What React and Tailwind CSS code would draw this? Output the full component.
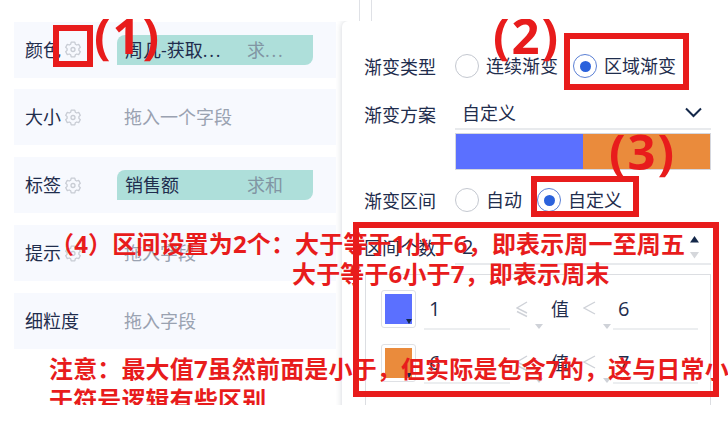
import React from 'react';
import clsx from 'clsx';

const FIELDS = [
    { label: '颜色', gear: true, pill: '周几-获取', agg: '求', truncated: true },
    { label: '大小', gear: true, placeholder: '拖入一个字段' },
    { label: '标签', gear: true, pill: '销售额', agg: '求和' },
    { label: '提示', gear: true, placeholder: '拖入字段' },
    { label: '细粒度', placeholder: '拖入字段' },
];

const RANGES = [
    { color: 'bg-[#5b70ff]', from: '1', to: '6' },
    { color: 'bg-[#ea8b3c]', from: '6', to: '7' },
];

export default function App() {
    return (
        <div className="relative flex h-[424px] w-[728px] flex-col overflow-hidden bg-white font-['Open_Sans','Noto_Sans_CJK_SC',sans-serif] text-[18px] leading-[24px] text-[#1f2d4d]">
            <div className="flex h-[21px] shrink-0 pl-[359px]">
                <div className="w-[13px] border-x border-[#dfe1e6]" />
            </div>
            <div className="flex h-[384px] shrink-0 overflow-hidden">
                <div className="flex w-[342px] shrink-0 flex-col gap-[11.9px] pl-[14px] pr-[6px] pt-[0.6px]">
                    {FIELDS.map((field) => <FieldRow key={field.label} {...field} />)}
                </div>
                <GradientPanel />
            </div>
            <Annotations />
        </div>
    );
}

function FieldRow({ label, gear, pill, agg, truncated, placeholder }) {
    return (
        <div className="flex h-14 shrink-0 items-center bg-[#f7f9fe] pl-[11px]">
            <div className="flex w-[92px] items-center gap-1">
                <span>{label}</span>
                {gear && <GearIcon />}
            </div>
            {pill ? (
                <div className="flex h-[30px] w-[196px] items-center rounded-tl-lg rounded-br-lg bg-[#aedfda] pl-2">
                    <span className="w-[122px]">{pill}{truncated && <Dots />}</span>
                    <span className="text-[#8195a3]">{agg}{truncated && <Dots />}</span>
                </div>
            ) : (
                <span className="pl-[7px] text-[#9aa2b1]">{placeholder}</span>
            )}
        </div>
    );
}

function Dots() {
    return <span className="tracking-[1.8px]">...</span>;
}

function GradientPanel() {
    return (
        <div className="flex h-[420px] flex-1 flex-col rounded-tl-md bg-white pl-[22px] pr-[18px] pt-[33px] shadow-[0_0_6px_rgba(30,45,70,0.2)]">
            <div className="flex h-6 shrink-0 items-center">
                <Label className="pt-[2px]">渐变类型</Label>
                <Radio label="连续渐变" className="w-[118px]" />
                <Radio label="区域渐变" checked />
            </div>

            <div className="mt-[19px] flex h-[33px] shrink-0">
                <Label className="pt-1.5">渐变方案</Label>
                <div className="flex flex-1 items-center justify-between border-b-2 border-[#e8eaed] pl-[7px] pr-2">
                    <span>自定义</span>
                    <svg className="h-[12px] w-[19px]" viewBox="0 0 19 12" fill="none" stroke="#14284a" strokeWidth="2">
                        <path d="M2 1.5L9.5 9L17 1.5" />
                    </svg>
                </div>
            </div>
            <div className="ml-[91px] mt-[3px] flex h-[37px] shrink-0 border border-[#d5d7de]">
                <div className="w-1/2 bg-[#5b70ff]" />
                <div className="w-1/2 bg-[#ea8b3c]" />
            </div>

            <div className="mt-[18px] flex h-6 shrink-0 items-center">
                <Label className="pt-[2px]">渐变区间</Label>
                <Radio label="自动" className="w-[82px]" />
                <Radio label="自定义" checked />
            </div>

            <div className="mt-[19px] flex h-[34px] shrink-0">
                <Label className="pt-[5px]">区间个数</Label>
                <div className="flex flex-1 items-center justify-between border-b-2 border-[#e8eaed] pl-[7px] pr-3">
                    <span className="pb-px text-[20px]">2</span>
                    <svg className="h-[24px] w-[9px]" viewBox="0 0 9 24">
                        <path d="M0 7.5L4.5 1L9 7.5z" fill="#14284a" />
                        <path d="M0 17L4.5 23.5L9 17z" fill="#d5d7db" />
                    </svg>
                </div>
            </div>

            <div className="ml-px mt-[9px] flex h-[160px] w-[346px] shrink-0 flex-col gap-[15px] border border-[#dcdee2] pl-[15px] pt-[15px]">
                {RANGES.map((range) => <RangeRow key={range.to} {...range} />)}
            </div>
        </div>
    );
}

function Label({ children, className }) {
    return <span className={clsx('w-[91px] shrink-0', className)}>{children}</span>;
}

function Radio({ label, checked, className }) {
    return (
        <div className={clsx('flex items-center gap-[7px]', className)}>
            <span className={clsx('flex size-6 shrink-0 items-center justify-center rounded-full border', checked ? 'border-[#5b80d5]' : 'border-[#c4c8d0]')}>
                {checked && <span className="size-[11px] rounded-full bg-[#2b62dc]" />}
            </span>
            <span className="whitespace-nowrap pb-px">{label}</span>
        </div>
    );
}

function RangeRow({ color, from, to }) {
    return (
        <div className="flex h-[39px] shrink-0 items-start">
            <div className="flex h-[38px] w-[35px] rounded-[3px] border border-[#dfe1e5] p-[3px]">
                <div className={clsx('flex flex-1 items-end justify-end', color)}>
                    <svg className="h-[5px] w-[6px]" viewBox="0 0 6 5"><path d="M0 0h6L3 5z" fill="#14284a" /></svg>
                </div>
            </div>
            <span className="ml-[8px] h-[40px] w-[86px] border-b-2 border-[#eceef0] pl-[5px] pt-[7px] text-[20px]">{from}</span>
            <div className="flex h-10 w-[41px] items-start justify-between pl-[6px] pt-[11px]">
                <svg className="h-[17px] w-[12px]" viewBox="0 0 12 17" fill="none" stroke="#cfd2d8" strokeWidth="1.4">
                    <path d="M11 1L1 7l10 5M1 10.5l10 5" />
                </svg>
                <DownTick className="mr-[8px]" />
            </div>
            <span className="pt-[7px]">值</span>
            <div className="flex h-10 w-[44px] items-start justify-between pl-[14px] pt-[11px]">
                <svg className="h-[14px] w-[13px]" viewBox="0 0 13 14" fill="none" stroke="#cfd2d8" strokeWidth="1.4">
                    <path d="M12 1L1 7l11 6" />
                </svg>
            </div>
            <span className="relative h-[40px] w-[85px] border-b-2 border-[#eceef0] pl-[5px] pt-[7px] text-[20px]">
                {to}
                <span className="absolute -left-[10px] top-[11px]"><DownTick /></span>
            </span>
        </div>
    );
}

function DownTick({ className }) {
    return (
        <svg className={clsx('mt-[23px] h-[5px] w-[8px] shrink-0', className)} viewBox="0 0 8 5">
            <path d="M0 0h8L4 5z" fill="#cfd2d8" />
        </svg>
    );
}

function GearIcon() {
    return (
        <svg className="h-[17px] w-[16px]" viewBox="0 0 16 17" fill="none" stroke="#c8ccd4" strokeWidth="1.3" strokeLinejoin="round">
            <path d="M6.2 1.2h3.6l.5 2 1.4.8 2-.6 1.6 2.8-1.4 1.4v1.8l1.4 1.4-1.6 2.8-2-.6-1.4.8-.5 2H6.2l-.5-2-1.4-.8-2 .6-1.6-2.8 1.4-1.4V7.600L.7 6.200l1.600-2.800 2 .6 1.400-.8z" />
            <circle cx="8" cy="8.5" r="2" />
        </svg>
    );
}

// Red tutorial marks drawn over the two panels
function Annotations() {
    return (
        <div className="absolute left-0 top-[19px] h-[386px] w-[728px] overflow-hidden whitespace-nowrap text-[24px] font-bold leading-[31px] tracking-[0.15px] text-[#e81c1c]">
            <div className="absolute left-[53px] top-[6px] h-[42px] w-[40px] border-[6px] border-[#e81c1c]" />
            <div className="absolute left-[564px] top-[14px] h-[57px] w-[125px] border-[6px] border-[#e81c1c]" />
            <div className="absolute left-[531px] top-[157px] h-[41px] w-[108px] border-[6px] border-[#e81c1c]" />
            <div className="absolute left-[353px] top-[203px] h-[175px] w-[366px] border-[6px] border-[#e81c1c]" />
            <span className="absolute left-[94px] top-[-14px] text-[49px] leading-[60px] tracking-[2px]">(1)</span>
            <span className="absolute left-[493px] top-[-14px] text-[49px] leading-[60px] tracking-[2px]">(2)</span>
            <span className="absolute left-[609px] top-[102px] text-[49px] leading-[60px] tracking-[2px]">(3)</span>
            <p className="absolute left-[50px] top-[209px]">（4）区间设置为2个：大于等于1小于6，即表示周一至周五</p>
            <p className="absolute left-[292px] top-[239px]">大于等于6小于7，即表示周末</p>
            <p className="absolute left-[49px] top-[334px]">
                注意：最大值7虽然前面是小于，但实际是包含7的，这与日常小
                <br />
                于符号逻辑有些区别
            </p>
        </div>
    );
}
